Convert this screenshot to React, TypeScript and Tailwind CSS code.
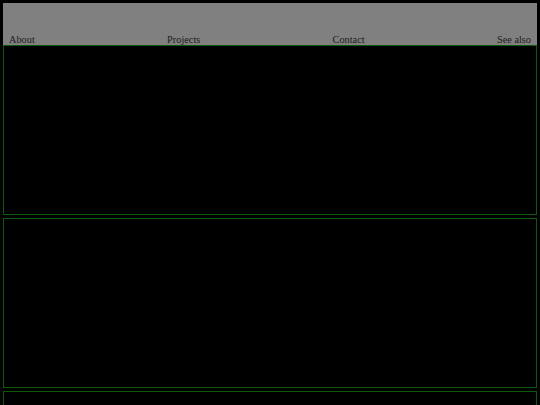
const NAV = ['About', 'Projects', 'Contact', 'See also'];

export default function App() {
  return (
    <div className="min-h-screen h-[405px] overflow-hidden bg-black p-[3px] font-['Liberation_Serif',serif]">
      <header className="h-[42px] bg-[#808080] flex items-end justify-between px-[6px]">
        {NAV.map((item) => (
          <a key={item} className="text-[10.3px] leading-[11px] text-[#1c1c1c]">
            {item}
          </a>
        ))}
      </header>
      <div className="flex flex-col gap-[3px]">
        <section className="h-[170px] shrink-0 border border-[#0d5a0d]" />
        <section className="h-[170px] shrink-0 border border-[#0d5a0d]" />
        <section className="h-[170px] shrink-0 border border-[#0d5a0d]" />
      </div>
    </div>
  );
}
